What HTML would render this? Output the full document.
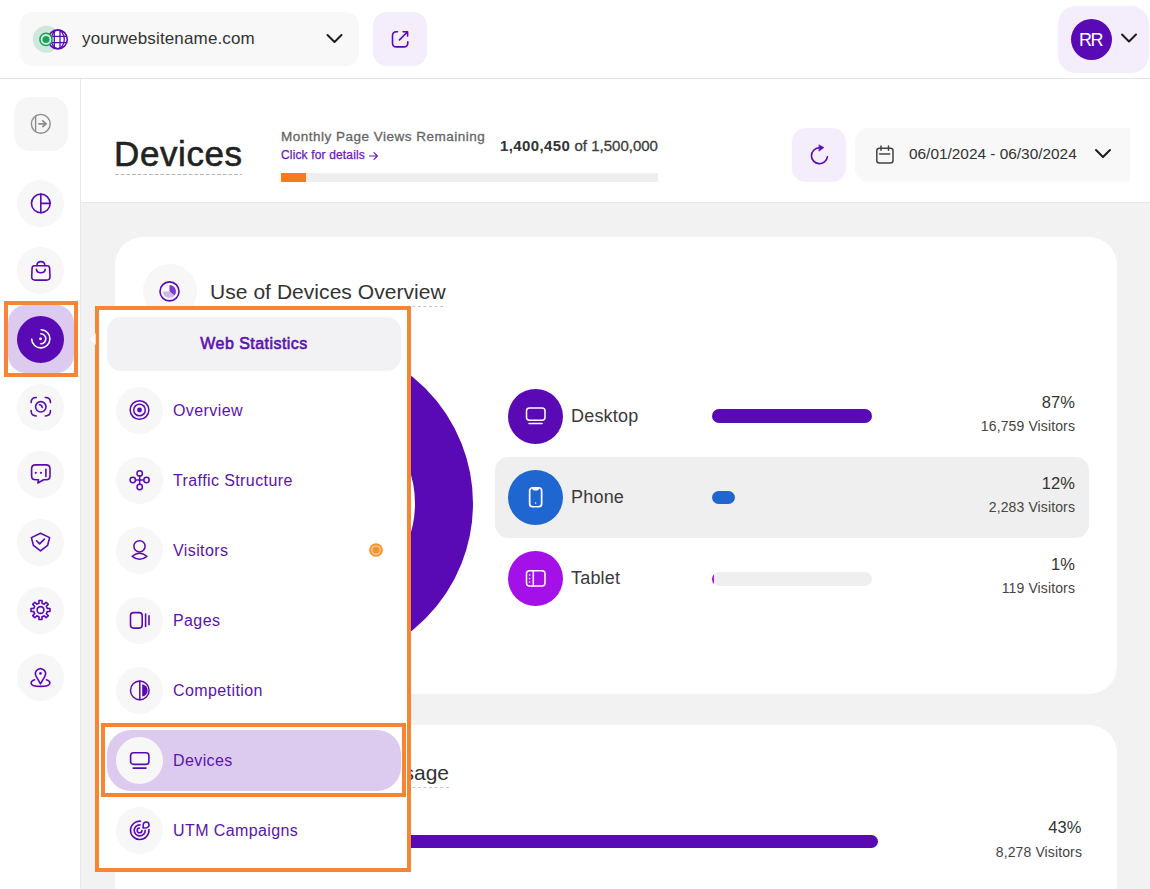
<!DOCTYPE html>
<html><head><meta charset="utf-8">
<style>
*{box-sizing:border-box}
html,body{margin:0;padding:0}
body{width:1150px;height:889px;overflow:hidden;position:relative;background:#fff;font-family:"Liberation Sans",sans-serif;color:#333}
.a{position:absolute}
.t{position:absolute;white-space:nowrap;line-height:1}
svg{display:block;position:absolute;overflow:visible}
.circ{position:absolute;border-radius:50%}
.ic{width:32px;height:32px;fill:none;stroke:#5a0ab4;stroke-width:1.6;stroke-linecap:round;stroke-linejoin:round}
.sb{position:absolute;left:17px;width:47px;height:47px;border-radius:50%;background:#f7f7f7}
.mi{position:absolute;left:116px;width:47px;height:47px;border-radius:50%;background:#f7f7f7}
.ml{position:absolute;left:173px;font-size:16px;letter-spacing:0.4px;color:#5b12b0;white-space:nowrap;line-height:1}
.dev{position:absolute;left:508px;width:55px;height:55px;border-radius:50%}
.dl{position:absolute;left:571px;margin-top:1px;font-size:18px;letter-spacing:0.2px;color:#3a3a3a;white-space:nowrap;line-height:1}
.pct{position:absolute;right:75px;font-size:16.5px;letter-spacing:0.1px;color:#333;white-space:nowrap;line-height:1;text-align:right}
.vis{position:absolute;right:75px;font-size:14px;letter-spacing:0.12px;color:#444;white-space:nowrap;line-height:1;text-align:right}
.wic{width:32px;height:32px;fill:none;stroke:#fff;stroke-width:1.6;stroke-linecap:round;stroke-linejoin:round}
</style></head><body>

<!-- ============ HEADER ============ -->
<div class="a" style="left:0;top:78px;width:1150px;height:1px;background:#e3e3e3"></div>
<div class="a" style="left:20px;top:12px;width:339px;height:54px;background:#f8f8f8;border-radius:13px"></div>
<svg style="left:28px;top:22px;width:44px;height:36px" viewBox="0 0 44 36">
  <circle cx="18.3" cy="17.3" r="13.5" fill="#cfe7dc"/>
  <defs><clipPath id="gclip"><circle cx="29.8" cy="17.4" r="9.3"/></clipPath></defs>
  <circle cx="29.8" cy="17.4" r="9.5" fill="#fff" stroke="#5a0ab4" stroke-width="1.6"/>
  <g clip-path="url(#gclip)" stroke="#5a0ab4" stroke-width="1.3" fill="none">
    <line x1="26.3" y1="7" x2="26.3" y2="28"/><line x1="32" y1="7" x2="32" y2="28"/>
    <line x1="19" y1="14.4" x2="40" y2="14.4"/><line x1="19" y1="20.6" x2="40" y2="20.6"/>
    <ellipse cx="29.8" cy="17.4" rx="6.5" ry="9.3"/>
  </g>
  <circle cx="18" cy="17.4" r="6.1" fill="#d8efe3" stroke="#18a157" stroke-width="1.5"/>
  <circle cx="18" cy="17.4" r="3.5" fill="#18a157"/>
</svg>
<div class="t" style="left:82px;top:30px;font-size:17px;letter-spacing:0.15px;color:#333">yourwebsitename.com</div>
<svg style="left:320px;top:27px;width:30px;height:24px" viewBox="0 0 30 24"><path d="M7.5 8 L14.5 15 L21.5 8" fill="none" stroke="#1c1c1c" stroke-width="2" stroke-linecap="round" stroke-linejoin="round"/></svg>

<div class="a" style="left:373px;top:12px;width:54px;height:54px;background:#f4eefc;border-radius:14px"></div>
<svg class="ic" style="left:384px;top:23px" viewBox="0 0 32 32" stroke-width="1.7"><path d="M13.5 8.8 H12.5 Q8.5 8.8 8.5 12.8 V19.9 Q8.5 23.9 12.5 23.9 H19.8 Q23.8 23.9 23.8 19.9 V18.7"/><path d="M15.5 16.9 L23.6 8.8 M19.1 8.8 H23.6 V13.1"/></svg>

<div class="a" style="left:1058px;top:6px;width:91px;height:67px;background:#f4eefc;border-radius:18px"></div>
<div class="circ" style="left:1071px;top:19px;width:41px;height:41px;background:#5a0ab4"></div>
<div class="t" style="left:1079px;top:31px;font-size:18px;letter-spacing:-1.6px;color:#fff">RR</div>
<svg style="left:1114px;top:26px;width:30px;height:24px" viewBox="0 0 30 24"><path d="M8 8.5 L15 15.5 L22 8.5" fill="none" stroke="#1c1c1c" stroke-width="2" stroke-linecap="round" stroke-linejoin="round"/></svg>

<!-- ============ SIDEBAR ============ -->
<div class="a" style="left:80px;top:79px;width:1px;height:810px;background:#e8e8e8"></div>
<div class="a" style="left:14px;top:97px;width:54px;height:54px;background:#f6f6f6;border-radius:16px"></div>
<svg class="ic" style="left:25px;top:108px;stroke:#8c8c8c;stroke-width:1.4" viewBox="0 0 32 32"><circle cx="15.8" cy="15.8" r="9.4"/><path d="M10.6 8 V23.6"/><path d="M14 15.8 H21.2 M17.8 12.9 L21.2 15.8 L17.8 18.7" stroke-width="1.7"/></svg>

<div class="sb" style="top:179.5px"></div>
<svg class="ic" style="left:25px;top:187px" viewBox="0 0 32 32"><circle cx="15.8" cy="16.4" r="9.3"/><path d="M15.8 7.1 V25.7 M15.8 16.4 H25.1"/></svg>
<div class="sb" style="top:247px"></div>
<svg class="ic" style="left:25px;top:255px" viewBox="0 0 32 32"><path d="M9.3 10.7 H22.3 Q24.4 10.7 24.6 13 L25 21.5 Q25.1 25.1 21.5 25.1 H10.2 Q6.6 25.1 6.7 21.5 L7.1 13 Q7.2 10.7 9.3 10.7 Z"/><path d="M11.9 10.7 Q12 6.6 15.9 6.6 Q19.8 6.6 19.9 10.7"/><path d="M11.4 14.4 Q11.6 17.7 15.8 17.7 Q20 17.7 20.2 14.4"/></svg>

<div class="a" style="left:8px;top:305px;width:66px;height:68px;background:#dccbef;border-radius:18px"></div>
<div class="sb" style="top:315.5px;background:#5a0ab4"></div>
<svg class="wic" style="left:25px;top:323px" viewBox="0 0 32 32"><circle cx="15.5" cy="15.8" r="1.4" fill="#fff" stroke="none"/><path d="M15.8 10.8 A5 5 0 0 1 15.8 20.8"/><path d="M16.2 6.7 A9.1 9.1 0 1 1 6.7 16.3"/></svg>

<div class="sb" style="top:383.5px"></div>
<svg class="ic" style="left:25px;top:391px" viewBox="0 0 32 32"><path d="M6.1 11.6 Q6.1 6.5 11.3 6.5 M20.3 6.5 Q25.5 6.5 25.5 11.6 M6.1 19.6 Q6.1 25 11.3 25 M25.5 19.6 Q25.5 25 20.3 25"/><circle cx="15.8" cy="15.8" r="5.2"/><path d="M14.5 13.8 A2.6 2.6 0 0 1 17.2 16.5"/></svg>
<div class="sb" style="top:451px"></div>
<svg class="ic" style="left:25px;top:458px" viewBox="0 0 32 32"><path d="M10.6 6.9 H21 Q25 6.9 25 10.9 V17.7 Q25 21.8 21 21.8 H18.6 L12.9 25 L13.5 21.8 H10.6 Q6.6 21.8 6.6 17.7 V10.9 Q6.6 6.9 10.6 6.9 Z"/><circle cx="10.8" cy="14.8" r="1.1" fill="#5a0ab4" stroke="none"/><circle cx="16" cy="14.8" r="1.1" fill="#5a0ab4" stroke="none"/><path d="M20.9 11.3 V18.4"/></svg>
<div class="sb" style="top:519px"></div>
<svg class="ic" style="left:25px;top:526px" viewBox="0 0 32 32"><path d="M15.5 7.3 L24.6 11.6 L22.6 19.4 L15.5 24.9 L8.4 19.4 L6.4 11.6 Z"/><path d="M11.6 14.8 L14.6 17.9 L19.4 13.1"/></svg>
<div class="sb" style="top:586.5px"></div>
<svg class="ic" style="left:25px;top:594px" viewBox="0 0 32 32" id="gear"><path d="M12.86 9.63 L13.99 9.27 L14.00 6.52 L17.00 6.52 L17.01 9.27 L18.14 9.63 L19.20 10.17 L21.14 8.23 L23.27 10.36 L21.33 12.30 L21.87 13.36 L22.23 14.49 L24.98 14.50 L24.98 17.50 L22.23 17.51 L21.87 18.64 L21.33 19.70 L23.27 21.64 L21.14 23.77 L19.20 21.83 L18.14 22.37 L17.01 22.73 L17.00 25.48 L14.00 25.48 L13.99 22.73 L12.86 22.37 L11.80 21.83 L9.86 23.77 L7.73 21.64 L9.67 19.70 L9.13 18.64 L8.77 17.51 L6.02 17.50 L6.02 14.50 L8.77 14.49 L9.13 13.36 L9.67 12.30 L7.73 10.36 L9.86 8.23 L11.80 10.17 Z"/><circle cx="15.5" cy="16" r="3.4"/></svg>
<div class="sb" style="top:654px"></div>
<svg class="ic" style="left:25px;top:661px" viewBox="0 0 32 32"><path d="M15.5 22.8 L11.2 15.3 A5 5 0 1 1 19.8 15.3 Z"/><circle cx="15.5" cy="12.4" r="1.3" fill="#5a0ab4" stroke="none"/><path d="M9.6 18.7 Q6.1 19.8 6.1 22 Q6.1 25.4 15.5 25.4 Q24.9 25.4 24.9 22 Q24.9 19.8 21.4 18.7"/></svg>

<!-- sidebar highlight -->
<div class="a" style="left:4px;top:301px;width:74px;height:76px;border:4px solid #f98434"></div>

<!-- ============ MAIN ============ -->
<div class="a" style="left:81px;top:202px;width:1069px;height:687px;background:#f2f2f2"></div>
<div class="a" style="left:81px;top:202px;width:1069px;height:1px;background:#e8e8e8"></div>

<div class="t" style="left:114px;top:135.5px;font-size:35px;letter-spacing:0.6px;color:#222;-webkit-text-stroke:0.6px #222">Devices</div>
<div class="a" style="left:115px;top:174px;width:127px;height:1px;background-image:linear-gradient(90deg,#b4b4b4 62%,transparent 62%);background-size:5.68px 1px"></div>
<div class="t" style="left:281px;top:129.5px;font-size:13.5px;letter-spacing:0.5px;color:#666;-webkit-text-stroke:0.3px #666">Monthly Page Views Remaining</div>
<div class="t" style="left:281px;top:149px;font-size:12px;letter-spacing:0.15px;color:#6a16c0;-webkit-text-stroke:0.25px #6a16c0">Click for details</div>
<svg style="left:368px;top:151px;width:11px;height:10px" viewBox="0 0 11 10"><path d="M1.5 5 H9.3 M6 1.7 L9.3 5 L6 8.3" fill="none" stroke="#6a16c0" stroke-width="1.2" stroke-linecap="round" stroke-linejoin="round"/></svg>
<div class="t" style="left:500px;top:138px;font-size:15px;letter-spacing:0px;color:#3c3c3c"><b style="letter-spacing:0.4px;color:#333">1,400,450</b> <span style="-webkit-text-stroke:0.3px #3c3c3c">of 1,500,000</span></div>
<div class="a" style="left:281px;top:173px;width:377px;height:9px;background:#efefef"></div>
<div class="a" style="left:281px;top:173px;width:25px;height:9px;background:#f47b20"></div>

<div class="a" style="left:792px;top:128px;width:54px;height:54px;background:#f4eefc;border-radius:14px"></div>
<svg class="ic" style="left:803px;top:139px" viewBox="0 0 32 32" stroke-width="1.7"><path d="M24.4 17.8 A8 8 0 1 1 16 8.7"/><path d="M16.2 5.9 L20.9 8.6 L16.2 12 Z" fill="#5a0ab4" stroke-width="0.6"/></svg>
<div class="a" style="left:855px;top:128px;width:275px;height:54px;background:#f8f8f8;border-radius:14px 0 0 14px"></div>
<svg class="ic" style="left:868px;top:139px;stroke:#444;stroke-width:1.5" viewBox="0 0 32 32"><rect x="8.8" y="9.3" width="16.2" height="14.7" rx="2.5"/><path d="M13 6.9 V11.3 M20.5 6.9 V11.3 M11.6 14.9 H21.7"/></svg>
<div class="t" style="left:909px;top:146px;font-size:15.4px;color:#333">06/01/2024 - 06/30/2024</div>
<svg style="left:1088px;top:142px;width:30px;height:24px" viewBox="0 0 30 24"><path d="M8 8 L15 15 L22 8" fill="none" stroke="#1c1c1c" stroke-width="2" stroke-linecap="round" stroke-linejoin="round"/></svg>

<!-- ============ CARD 1 ============ -->
<div class="a" style="left:115px;top:237px;width:1002px;height:457px;background:#fff;border-radius:28px"></div>
<div class="circ" style="left:143px;top:264px;width:54px;height:54px;background:#f7f7f7"></div>
<svg class="ic" style="left:154px;top:275px" viewBox="0 0 32 32"><circle cx="15.5" cy="16.4" r="9.5"/><path d="M15.5 16.4 V10 A6.4 6.4 0 0 1 20.4 20.5 Z" fill="#7c3ccd" stroke="none"/><path d="M15.5 16.4 L20.4 20.5 A6.4 6.4 0 0 1 9.1 16.4 Z" fill="#cdb6ec" stroke="none"/></svg>
<div class="t" style="left:210px;top:280.5px;font-size:21px;letter-spacing:0.05px;color:#333">Use of Devices Overview</div>
<div class="a" style="left:211px;top:306px;width:235px;height:1px;background-image:linear-gradient(90deg,#c4c4c4 55%,transparent 55%);background-size:5.6px 1px"></div>

<!-- donut -->
<svg style="left:147px;top:340px;width:326px;height:327px" viewBox="0 0 326 327"><circle cx="163" cy="163.5" r="134" fill="none" stroke="#5a0ab4" stroke-width="58"/></svg>

<!-- rows -->
<div class="a" style="left:495px;top:456.5px;width:594px;height:81px;background:#efefef;border-radius:14px"></div>

<div class="dev" style="top:388.5px;background:#5a0ab4"></div>
<svg class="wic" style="left:520px;top:400px;stroke-width:1.5" viewBox="0 0 32 32"><rect x="6.5" y="7.9" width="18.5" height="12.3" rx="3"/><path d="M9 23.6 H22.1"/></svg>
<div class="dl" style="top:406px">Desktop</div>
<div class="a" style="left:712px;top:409px;width:160px;height:14px;background:#5a0ab4;border-radius:7px"></div>
<div class="pct" style="top:394px">87%</div>
<div class="vis" style="top:419px">16,759 Visitors</div>

<div class="dev" style="top:469.5px;background:#1f66d1"></div>
<svg class="wic" style="left:520px;top:481px;stroke-width:1.7" viewBox="0 0 32 32"><rect x="9.65" y="6.75" width="12" height="19" rx="3"/><path d="M12.9 7.3 Q13.2 8.6 14.3 8.6 H16.9 Q18 8.6 18.3 7.3" fill="#fff"/><circle cx="15.6" cy="22" r="0.8" fill="#fff" stroke="none"/></svg>
<div class="dl" style="top:487px">Phone</div>
<div class="a" style="left:712px;top:490.5px;width:23px;height:13.5px;background:#1f66d1;border-radius:7px"></div>
<div class="pct" style="top:475px">12%</div>
<div class="vis" style="top:500px">2,283 Visitors</div>

<div class="dev" style="top:551px;background:#a311e8"></div>
<svg class="wic" style="left:520px;top:562px;stroke-width:1.5" viewBox="0 0 32 32"><rect x="6.5" y="8.8" width="18.5" height="15.3" rx="3"/><path d="M13.3 8.8 V24.1"/><circle cx="9.6" cy="13.1" r="0.8" fill="#fff" stroke="none"/><circle cx="9.6" cy="16.6" r="0.8" fill="#fff" stroke="none"/><circle cx="9.6" cy="20" r="0.8" fill="#fff" stroke="none"/></svg>
<div class="dl" style="top:568px">Tablet</div>
<div class="a" style="left:712px;top:572px;width:160px;height:13.5px;background:#efefef;border-radius:7px;overflow:hidden"><div style="width:1.5px;height:100%;background:#a311e8"></div></div>
<div class="pct" style="top:556px">1%</div>
<div class="vis" style="top:581px">119 Visitors</div>

<!-- ============ CARD 2 ============ -->
<div class="a" style="left:115px;top:725px;width:1002px;height:300px;background:#fff;border-radius:28px"></div>
<div class="t" style="right:701px;top:762px;font-size:21px;color:#333">Browser Usage</div>
<div class="a" style="left:211px;top:787px;width:238px;height:1px;background-image:linear-gradient(90deg,#c4c4c4 55%,transparent 55%);background-size:5.6px 1px"></div>
<div class="a" style="left:300px;top:835px;width:578px;height:13px;background:#5a0ab4;border-radius:7px"></div>
<div class="pct" style="top:818.5px;right:68.5px">43%</div>
<div class="vis" style="top:844.5px;right:68px">8,278 Visitors</div>

<!-- ============ MENU ============ -->
<div class="a" style="left:95px;top:306px;width:316px;height:566px;background:#fff;border:4px solid #f98434"></div>
<svg style="left:88px;top:332px;width:8px;height:14px" viewBox="0 0 8 14"><path d="M8 1 L1.5 7 L8 13 Z" fill="#fff" opacity="0.7"/></svg>
<div class="a" style="left:107px;top:316.5px;width:294px;height:54px;background:#f2f2f5;border-radius:14px"></div>
<div class="t" style="left:107px;width:294px;text-align:center;top:336px;font-size:16px;letter-spacing:0.45px;color:#5b12b0;-webkit-text-stroke:0.6px #5b12b0">Web Statistics</div>

<div class="mi" style="top:386.5px"></div>
<svg class="ic" style="left:124px;top:394px;stroke-width:1.5" viewBox="0 0 32 32"><circle cx="15.5" cy="16" r="9.35"/><circle cx="15.5" cy="16" r="5.8"/><circle cx="15.5" cy="16" r="2.4" fill="#5a0ab4" stroke="none"/></svg>
<div class="ml" style="top:403px">Overview</div>

<div class="mi" style="top:456.5px"></div>
<svg class="ic" style="left:124px;top:464px;stroke-width:1.5" viewBox="0 0 32 32"><circle cx="15.7" cy="9.4" r="2.7"/><circle cx="15.7" cy="23" r="2.7"/><circle cx="8.8" cy="16" r="2.7"/><circle cx="22.5" cy="16" r="2.7"/><path d="M15.7 12.1 V20.3 M11.5 16 H19.8"/></svg>
<div class="ml" style="top:473px">Traffic Structure</div>

<div class="mi" style="top:526.5px"></div>
<svg class="ic" style="left:124px;top:534px;stroke-width:1.5" viewBox="0 0 32 32"><circle cx="15.5" cy="12.3" r="5.6"/><path d="M8.2 22.3 Q15.5 16.1 22.9 22.3 Q15.5 28.3 8.2 22.3 Z"/></svg>
<div class="ml" style="top:543px">Visitors</div>
<svg style="left:365.7px;top:540.3px;width:20px;height:20px" viewBox="0 0 20 20"><circle cx="10" cy="10" r="6.8" fill="#f7922a"/><circle cx="10" cy="10" r="4.2" fill="none" stroke="#fcd2a8" stroke-width="1.3"/></svg>

<div class="mi" style="top:596.5px"></div>
<svg class="ic" style="left:124px;top:604px;stroke-width:1.6" viewBox="0 0 32 32"><rect x="6.5" y="8.6" width="11.7" height="15.5" rx="3"/><path d="M21.6 10 V22.5 M25 11.7 V20.7"/></svg>
<div class="ml" style="top:613px">Pages</div>

<div class="mi" style="top:666.5px"></div>
<svg class="ic" style="left:124px;top:674px;stroke-width:1.5" viewBox="0 0 32 32"><circle cx="15.8" cy="16.4" r="9.3"/><path d="M15.8 7.1 V25.7"/><path d="M18.2 10.3 A6.2 6.2 0 0 1 18.2 22.6 Z" fill="#5a0ab4" stroke="none"/></svg>
<div class="ml" style="top:683px">Competition</div>

<div class="a" style="left:107px;top:730px;width:294px;height:61px;background:#dccbef;border-radius:24px"></div>
<div class="mi" style="top:736.5px;background:#f7f7f7"></div>
<svg class="ic" style="left:124px;top:744px;stroke-width:1.6" viewBox="0 0 32 32"><rect x="6.6" y="8.7" width="18.3" height="11.7" rx="3"/><path d="M9.2 24.1 H22"/></svg>
<div class="ml" style="top:753px">Devices</div>
<div class="a" style="left:101px;top:723px;width:305px;height:74px;border:4px solid #f98434"></div>

<div class="mi" style="top:806.5px"></div>
<svg class="ic" style="left:124px;top:814px;stroke-width:1.6" viewBox="0 0 32 32"><path d="M16.5 7.2 A9.2 9.2 0 1 0 24.9 15.6"/><path d="M16 10.9 A5.5 5.5 0 1 0 21.2 16.2"/><path d="M15.5 14 A2.4 2.4 0 1 0 18 16.6"/><path d="M19 14 L19.3 10.2 A2.9 2.9 0 1 1 22.8 13.7 Z"/></svg>
<div class="ml" style="top:823px">UTM Campaigns</div>

</body></html>
